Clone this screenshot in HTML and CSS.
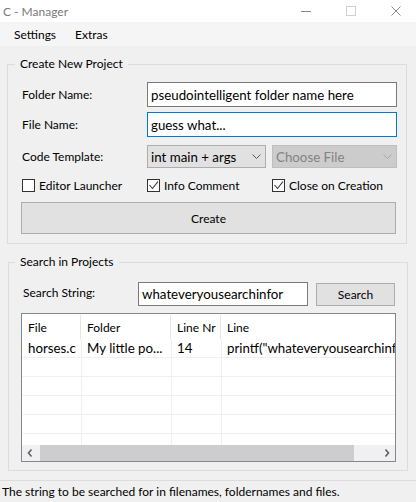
FILE: index.html
```html
<!DOCTYPE html>
<html>
<head>
<meta charset="utf-8">
<link rel="stylesheet" href="styles.css">
</head>
<body>
<div class="titlebar">
  <span class="title">C - Manager</span>
  <div class="controls">
    <svg class="ctl" width="10" height="10" viewBox="0 0 10 10"><line x1="0" y1="5.5" x2="10" y2="5.5" stroke="#8a8a8a" stroke-width="1"/></svg>
    <svg class="ctl" width="10" height="10" viewBox="0 0 10 10"><rect x="0.5" y="0.5" width="9" height="9" fill="none" stroke="#d0d0d0" stroke-width="1"/></svg>
    <svg class="ctl" width="10" height="10" viewBox="0 0 10 10"><path d="M0.5 0.5 L9.5 9.5 M9.5 0.5 L0.5 9.5" stroke="#8a8a8a" stroke-width="1" fill="none"/></svg>
  </div>
</div>
<div class="menubar">
  <span class="menu-item">Settings</span>
  <span class="menu-item">Extras</span>
</div>

<fieldset class="group group-create">
  <legend>Create New Project</legend>
  <div class="row row-first">
    <span class="label">Folder Name:</span>
    <div class="textbox wide">pseudointelligent folder name here</div>
  </div>
  <div class="row row-second">
    <span class="label">File Name:</span>
    <div class="textbox wide focused">guess what...</div>
  </div>
  <div class="row row-combo">
    <span class="label">Code Template:</span>
    <div class="combo combo-template">
      <span>int main + args</span>
      <svg width="9" height="5" viewBox="0 0 9 5"><polyline points="0.5,0.5 4.5,4.5 8.5,0.5" fill="none" stroke="#5a5a5a" stroke-width="1"/></svg>
    </div>
    <div class="combo combo-file disabled">
      <span>Choose File</span>
      <svg width="9" height="5" viewBox="0 0 9 5"><polyline points="0.5,0.5 4.5,4.5 8.5,0.5" fill="none" stroke="#a8a8a8" stroke-width="1"/></svg>
    </div>
  </div>
  <div class="row row-checks">
    <div class="check check-1"><span class="box"></span><span>Editor Launcher</span></div>
    <div class="check check-2"><span class="box"><svg width="11" height="11" viewBox="0 0 11 11"><polyline points="1.5,5 4.5,8.5 10,1.5" fill="none" stroke="#333" stroke-width="1.1"/></svg></span><span>Info Comment</span></div>
    <div class="check"><span class="box"><svg width="11" height="11" viewBox="0 0 11 11"><polyline points="1.5,5 4.5,8.5 10,1.5" fill="none" stroke="#333" stroke-width="1.1"/></svg></span><span>Close on Creation</span></div>
  </div>
  <div class="button create">Create</div>
</fieldset>

<fieldset class="group group-search">
  <legend>Search in Projects</legend>
  <div class="search-row">
    <span class="label search-label">Search String:</span>
    <div class="textbox search-box">whateveryousearchinfor</div>
    <div class="button search-btn">Search</div>
  </div>
  <div class="table">
    <div class="thead">
      <div class="th c1">File</div>
      <div class="th c2">Folder</div>
      <div class="th c3">Line Nr</div>
      <div class="th c4">Line</div>
    </div>
    <div class="tbody">
      <div class="tr">
        <div class="td c1">horses.c</div>
        <div class="td c2">My little po...</div>
        <div class="td c3">14</div>
        <div class="td c4">printf("whateveryousearchinfor");</div>
      </div>
      <div class="tr"><div class="td c1"></div><div class="td c2"></div><div class="td c3"></div><div class="td c4"></div></div>
      <div class="tr"><div class="td c1"></div><div class="td c2"></div><div class="td c3"></div><div class="td c4"></div></div>
      <div class="tr"><div class="td c1"></div><div class="td c2"></div><div class="td c3"></div><div class="td c4"></div></div>
      <div class="tr"><div class="td c1"></div><div class="td c2"></div><div class="td c3"></div><div class="td c4"></div></div>
      <div class="tr"><div class="td c1"></div><div class="td c2"></div><div class="td c3"></div><div class="td c4"></div></div>
    </div>
    <div class="hscroll">
      <svg class="arrow" width="17" height="16" viewBox="0 0 17 16"><polyline points="9.5,4.5 6.5,8 9.5,11.5" fill="none" stroke="#606060" stroke-width="1.6"/></svg>
      <div class="thumb"></div>
      <svg class="arrow" width="17" height="16" viewBox="0 0 17 16"><polyline points="7.5,4.5 10.5,8 7.5,11.5" fill="none" stroke="#606060" stroke-width="1.6"/></svg>
    </div>
  </div>
</fieldset>

<div class="statusbar">The string to be searched for in filenames, foldernames and files.</div>
</body>
</html>
```

FILE: styles.css
```css
* { box-sizing: border-box; }

html, body {
  margin: 0;
  padding: 0;
}

body {
  width: 416px;
  height: 502px;
  overflow: hidden;
  background: #f0f0f0;
  font-family: Lato, "Noto Sans", sans-serif;
  font-size: 12px;
  color: #000;
  display: flex;
  flex-direction: column;
}

/* title bar */
.titlebar {
  height: 22px;
  flex: none;
  background: #fff;
  display: flex;
  align-items: center;
  justify-content: space-between;
}
.title {
  padding-left: 3px;
  color: #7a7a7a;
  font-size: 12px;
}
.controls {
  display: flex;
  align-items: center;
  gap: 35px;
  padding-right: 15px;
}
.ctl { display: block; }

/* menu */
.menubar {
  height: 24px;
  flex: none;
  background: #f5f5f5;
  display: flex;
  align-items: center;
  padding-left: 14px;
  gap: 19px;
}

/* groups */
.group {
  flex: none;
  margin: 10px 9px 0 7px;
  border: 1px solid #dcdcdc;
  padding: 10px 9px 9px 13px;
  min-width: 0;
}
.group legend {
  padding: 0 5px;
  margin-left: -6px;
  line-height: 16px;
  font-size: 12px;
}
.group-search {
  margin: 10px 8px 0 8px;
  padding: 12px 11px 8px 12px;
}

.row {
  display: flex;
  align-items: center;
}
.row-second { margin-top: 5px; }
.row-combo { margin-top: 8px; }
.row-checks { margin-top: 11px; height: 13px; }

.label {
  width: 126px;
  flex: none;
  padding-left: 1px;
}

.textbox {
  height: 25px;
  border: 1px solid #7a7a7a;
  background: #fff;
  padding-left: 3px;
  font-size: 13.3px;
  display: flex;
  align-items: center;
  white-space: nowrap;
  overflow: hidden;
}
.textbox.wide { width: 250px; }
.textbox.focused { border-color: #0078d7; }

.combo {
  height: 23px;
  border: 1px solid #adadad;
  background: #e1e1e1;
  font-size: 13.3px;
  display: flex;
  align-items: center;
  justify-content: space-between;
  padding: 0 4px 0 3px;
}
.combo svg { display: block; }
.combo-template { width: 119px; }
.combo-file { width: 125px; margin-left: 6px; }
.combo.disabled {
  background: #cccccc;
  border-color: #bfbfbf;
  color: #838383;
}

.check {
  display: flex;
  align-items: center;
  gap: 4px;
}
.check-1 { width: 126px; padding-left: 1px; }
.check-2 { width: 125px; }
.box {
  width: 13px;
  height: 13px;
  border: 1px solid #333;
  background: #fff;
  display: flex;
  align-items: center;
  justify-content: center;
}
.box svg { display: block; }

.button {
  border: 1px solid #adadad;
  background: #e1e1e1;
  display: flex;
  align-items: center;
  justify-content: center;
}
.create {
  margin-top: 10px;
  width: 375px;
  height: 32px;
}

/* search */
.search-row {
  display: flex;
  align-items: flex-end;
  height: 24px;
}
.search-label {
  width: 117px;
  padding-left: 2px;
  align-self: center;
  margin-top: -3px;
}
.search-box {
  width: 170px;
  height: 24px;
}
.search-btn {
  width: 79px;
  height: 23px;
  margin-left: 8px;
}

.table {
  margin-top: 7px;
  width: 375px;
  height: 149px;
  border: 1px solid #828790;
  background: #fff;
  display: flex;
  flex-direction: column;
  overflow: hidden;
}
.thead {
  height: 25px;
  flex: none;
  display: flex;
}
.th {
  height: 24px;
  margin-top: 1px;
  padding-left: 6px;
  display: flex;
  align-items: center;
  white-space: nowrap;
}
.th.c1, .th.c2, .th.c3 { border-right: 1px solid #e5e5e5; }
.c1 { width: 59px; }
.c2 { width: 90px; }
.c3 { width: 50px; }
.c4 { flex: 1; min-width: 0; }

.tbody {
  flex: 1;
  overflow: hidden;
}
.tr {
  height: 19px;
  display: flex;
  border-bottom: 1px solid #f0f0f0;
}
.td {
  padding-left: 6px;
  font-size: 13.3px;
  line-height: 18px;
  white-space: nowrap;
  overflow: hidden;
}
.td.c2, .td.c3, .td.c4 { border-left: 1px solid #f0f0f0; padding-left: 5px; }

.hscroll {
  height: 16px;
  flex: none;
  background: #f0f0f0;
  display: flex;
  align-items: stretch;
}
.arrow { display: block; flex: none; }
.thumb {
  width: 314px;
  margin-left: 1px;
  background: #cdcdcd;
}
.hscroll .arrow:last-child { margin-left: auto; }

.statusbar {
  margin-top: 9px;
  border-top: 1px solid #dcdcdc;
  height: 21px;
  flex: none;
  padding-left: 2px;
  display: flex;
  align-items: center;
  white-space: nowrap;
}
```
